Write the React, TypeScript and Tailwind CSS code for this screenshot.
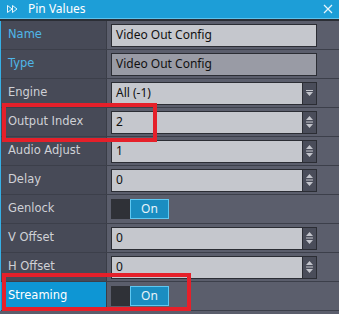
import React from 'react';

type Row = {
  label: string;
  kind: 'text' | 'textDim' | 'select' | 'spin' | 'toggle';
  value?: string;
  labelTone?: 'blue' | 'active';
};

const rows: Row[] = [
  { label: 'Name', kind: 'text', value: 'Video Out Config', labelTone: 'blue' },
  { label: 'Type', kind: 'textDim', value: 'Video Out Config', labelTone: 'blue' },
  { label: 'Engine', kind: 'select', value: 'All (-1)' },
  { label: 'Output Index', kind: 'spin', value: '2' },
  { label: 'Audio Adjust', kind: 'spin', value: '1' },
  { label: 'Delay', kind: 'spin', value: '0' },
  { label: 'Genlock', kind: 'toggle' },
  { label: 'V Offset', kind: 'spin', value: '0' },
  { label: 'H Offset', kind: 'spin', value: '0' },
  { label: 'Streaming', kind: 'toggle', labelTone: 'active' },
];

const SpinButton = () => (
  <div className="flex h-full w-[14px] items-center justify-center border-l border-[#2b2d34] bg-[#4a4d5a]">
    <svg width="9" height="14" viewBox="0 0 9 14">
      <path d="M4.5 1 L8 5 L1 5 Z" fill="#c3c5cc" />
      <rect x="1" y="6.5" width="7" height="1" fill="#c3c5cc" />
      <path d="M1 9 L8 9 L4.5 13 Z" fill="#c3c5cc" />
    </svg>
  </div>
);

const DropButton = () => (
  <div className="flex h-full w-[14px] items-center justify-center border-l border-[#2b2d34] bg-[#4a4d5a]">
    <svg width="9" height="8" viewBox="0 0 9 8">
      <rect x="1" y="1" width="7" height="1" fill="#c3c5cc" />
      <path d="M1 3 L8 3 L4.5 7 Z" fill="#c3c5cc" />
    </svg>
  </div>
);

const Toggle = () => (
  <div className="flex h-[20px] w-[58px]">
    <div className="w-[19px] bg-[#2f3137]" />
    <div className="flex flex-1 items-center justify-center border border-[#5ec8f2] bg-[#1a8dc1] font-['Noto_Sans',sans-serif] text-[12px] text-[#e8f4fa]">
      On
    </div>
  </div>
);

const Field = ({ row }: { row: Row }) => {
  if (row.kind === 'toggle') return <Toggle />;
  const bg = row.kind === 'textDim' ? 'bg-[#999ba5]' : 'bg-[#c5c7cd]';
  return (
    <div className={`flex h-[23px] w-[206px] items-stretch border border-[#2b2d34] ${bg}`}>
      <div className="flex flex-1 items-center pl-[4px] font-['Noto_Sans',sans-serif] text-[12px] text-[#111]">
        {row.value}
      </div>
      {row.kind === 'spin' && <SpinButton />}
      {row.kind === 'select' && <DropButton />}
    </div>
  );
};

const App = () => {
  return (
    <div className="relative h-[314px] w-[339px] overflow-hidden bg-[#5b5e6c] font-['DejaVu_Sans',sans-serif]">
      <div className="flex h-[18px] items-center bg-[#1d9ed7] pl-[7px] pr-[6px]">
        <svg width="11" height="8" viewBox="0 0 11 8">
          <path d="M0.5 0.5 L5 4 L0.5 7.5 Z" fill="#1d9ed7" stroke="#e6f5fc" />
          <path d="M5.5 0.5 L10 4 L5.5 7.5 Z" fill="#1d9ed7" stroke="#e6f5fc" />
        </svg>
        <span className="ml-[10px] font-['Noto_Sans',sans-serif] text-[12px] text-white">Pin Values</span>
        <svg className="ml-auto" width="10" height="10" viewBox="0 0 10 10">
          <path d="M1 1 L9 9 M9 1 L1 9" stroke="#e6f5fc" strokeWidth="1.2" />
        </svg>
      </div>
      <div className="h-[3px] border-t border-[#5cc3ee] bg-[#2b2e35]" />

      <div className="border-l border-[#36b0e6]">
        {rows.map((row) => {
          const labelBg = row.labelTone === 'active' ? 'bg-[#0e96d4]' : 'bg-[#474a57]';
          const labelColor =
            row.labelTone === 'blue'
              ? 'text-[#4fb6e8]'
              : row.labelTone === 'active'
                ? 'text-white'
                : 'text-[#cfd1d6]';
          return (
            <div key={row.label} className="flex h-[29px] border-b border-[#3c3f4a]">
              <div
                className={`flex w-[106px] items-center border-r border-[#3a3d47] pl-[7px] text-[11.5px] ${labelBg} ${labelColor}`}
              >
                {row.label}
              </div>
              <div className="flex flex-1 items-center pl-[4px]">
                <Field row={row} />
              </div>
            </div>
          );
        })}
      </div>

      <div className="pointer-events-none absolute left-[2px] top-[103px] h-[39px] w-[155px] border-[4px] border-[#e5202a]" />
      <div className="pointer-events-none absolute left-[2px] top-[273px] h-[38px] w-[189px] border-[4px] border-[#e5202a]" />
    </div>
  );
};

export default App;
